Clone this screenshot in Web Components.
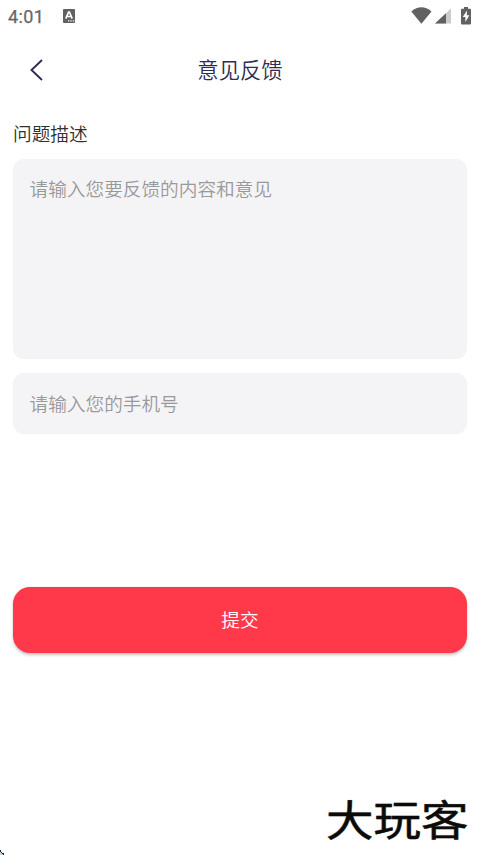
<!DOCTYPE html>
<html lang="zh-CN">
<head>
<meta charset="utf-8">
<title>意见反馈</title>
<style>
html,body{margin:0;height:100%;background:#fff;overflow:hidden}
body{font-family:"Noto Sans CJK SC",sans-serif;font-weight:350}
</style>
</head>
<body>
<feedback-page></feedback-page>
<script>
const define=(name,html)=>customElements.define(name,class extends HTMLElement{
  constructor(){super();const t=document.createElement('template');t.innerHTML=html;
    this.attachShadow({mode:'open'}).append(t.content.cloneNode(true));}
});

define('status-bar',`<style>
:host{display:flex;align-items:center;height:32px;padding:0 9px 0 8px;box-sizing:border-box;color:#666}
.time{font:400 18px/32px Roboto,sans-serif;width:54px;padding-top:2px;letter-spacing:.35px;-webkit-text-stroke:.25px #666}
.status{margin-left:auto;display:flex}
svg{display:block}
</style>
<span class="time"><slot></slot></span>
<svg width="14" height="32" viewBox="0 0 14 32"><rect x="1" y="9" width="12" height="14" rx="1" fill="#616161"/><path d="M3.8 18.7 6.6 12h.8l2.8 6.7M5 16.500h4" fill="none" stroke="#fff" stroke-width="1.7"/><path d="M6 20.9h1.3M8.4 20.9h1.3M10.8 20.9h1.3" stroke="#fff" stroke-width="1.3"/></svg>
<svg class="status" width="62" height="32" viewBox="0 0 62 32">
<path d="M2.3 11.4Q12.4 3.3 22.500 11.4L12.4 23.8Z" fill="#616161"/>
<path d="M42 8.500V23.500H26Z" fill="#cbcbcb"/><path d="M37 13.200V23.500H26Z" fill="#616161"/>
<path d="M62 9.800V23.500q0 1-1 1h-8q-1 0-1-1V9.800q0-1 1-1h2V7h4v1.800h2q1 0 1 1Z" fill="#616161"/><path d="M58 10.500 53.700 17h2.700v5l4-6.700h-2.600Z" fill="#fff"/></svg>`);

define('page-header',`<style>
:host{display:grid;grid-template-columns:60px 1fr 60px;align-items:center;height:75px;color:#302b50}
svg{display:block;margin-left:28px}
.title{text-align:center;font-size:21.33px;line-height:32px;padding-bottom:1px}
</style>
<svg width="18" height="24" viewBox="0 0 18 24"><path d="M14 2 3.500 12 14 22" fill="none" stroke="#302b50" stroke-width="1.900"/></svg>
<span class="title"><slot></slot></span>`);

define('field-label',`<style>
:host{display:block;padding:0 13px;font-size:18.67px;line-height:28px;color:#303030;margin-top:12px}
</style><slot></slot>`);

define('form-field',`<style>
:host{display:block;box-sizing:border-box;margin:0 13px;padding:14.500px 16.500px;border-radius:11px;background:#f4f4f7;color:#999;font-size:18.67px;line-height:28px}
</style><slot></slot>`);

define('submit-button',`<style>
:host{display:block;margin:152.500px 13px 0}
button{display:block;width:100%;height:66.500px;border:0;border-radius:17px;background:#ff394a;color:#fff;font:inherit;font-size:18.67px;line-height:28px;padding:0 0 1px;box-shadow:0 1.500px 3px rgba(0,0,0,.24)}
</style><button><slot></slot></button>`);

define('site-mark',`<style>
:host{position:absolute;left:326px;top:784px;width:150px;height:68px}
span{display:block;font-weight:400;font-size:47.500px;line-height:68px;white-space:nowrap;color:#0b0b0b;-webkit-text-stroke:.5px #0b0b0b;transform:scaleY(.88);text-shadow:0 0 1.500px #b5ad83}
</style><span><slot></slot></span>`);

define('corner-mark',`<style>
:host{position:absolute;left:0;bottom:0}svg{display:block}
</style><svg width="5" height="5" viewBox="0 0 5 5"><path d="M0 1h1v1h1v1h1v1h1v1H0Z" fill="#bcd6e5"/><path d="M0 0h1v2H0zM1 2h1v1H1zM2 3h2v1H2zM3 4h1v1H3z" fill="#222"/></svg>`);

define('feedback-page',`<style>
:host{display:block;position:relative;width:480px;height:855px;background:#fff}
.message{height:200px;margin-top:12px}.phone{height:61px;margin-top:14px;padding-top:16px}
</style>
<status-bar>4:01</status-bar>
<page-header>意见反馈</page-header>
<field-label>问题描述</field-label>
<form-field class="message">请输入您要反馈的内容和意见</form-field>
<form-field class="phone">请输入您的手机号</form-field>
<submit-button>提交</submit-button>
<site-mark>大玩客</site-mark>
<corner-mark></corner-mark>`);
</script>
</body>
</html>
